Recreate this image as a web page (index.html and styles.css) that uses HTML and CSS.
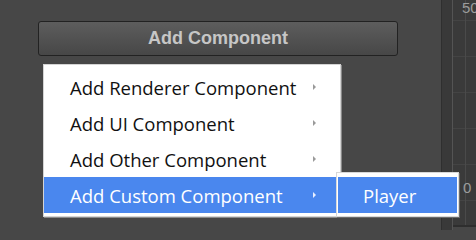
FILE: index.html
```html
<!DOCTYPE html>
<html>
<head>
<meta charset="utf-8">
<link rel="stylesheet" href="styles.css">
</head>
<body>
<div class="screen">
  <div class="inspector">
    <div class="add-btn">Add Component</div>
  </div>
  <div class="divider"></div>
  <div class="chart">
    <span class="label label-top">50</span>
    <span class="label label-zero">0</span>
  </div>

  <div class="menu">
    <div class="item"><span>Add Renderer Component</span><i class="arrow"></i></div>
    <div class="item"><span>Add UI Component</span><i class="arrow"></i></div>
    <div class="item"><span>Add Other Component</span><i class="arrow"></i></div>
    <div class="item active"><span>Add Custom Component</span><i class="arrow"></i></div>
  </div>
  <div class="submenu">
    <div class="item active"><span>Player</span></div>
  </div>
</div>
</body>
</html>
```
FILE: styles.css
```css
html, body {
  margin: 0;
  padding: 0;
}
body {
  background: #474747;
  width: 476px;
  height: 230px;
  overflow: hidden;
}
.screen {
  position: relative;
  display: flex;
  width: 476px;
  height: 230px;
}
.inspector {
  width: 441px;
  flex: none;
  padding: 21px 0 0 38px;
  box-sizing: border-box;
  background: #474747;
}
.add-btn {
  width: 360px;
  height: 35px;
  box-sizing: border-box;
  border: 1px solid #222;
  border-radius: 3px;
  background: linear-gradient(#5d5d5d, #474747);
  color: #c6c6c6;
  font-family: "Liberation Sans", Arial, sans-serif;
  font-weight: bold;
  font-size: 18px;
  display: flex;
  align-items: center;
  justify-content: center;
}
.divider {
  width: 12px;
  flex: none;
  box-sizing: border-box;
  background: #393939;
  border-left: 1px solid #2f2f2f;
  border-right: 1px solid #545454;
}
.chart {
  position: relative;
  flex: 1;
  background-color: #3a3a3a;
  background-image:
    linear-gradient(#4a4a4a, #4a4a4a),
    repeating-linear-gradient(to bottom, transparent 0, transparent 19px, #444 19px, #444 20px, transparent 20px, transparent 36px);
  background-size: 1px 100%, 100% 100%;
  background-position: 12px 0, 0 1px;
  background-repeat: no-repeat;
  border-bottom: 2px solid #2e2e2e;
  height: 225px;
  overflow: hidden;
}
.label {
  position: absolute;
  color: #9c9c9c;
  font-family: "Liberation Sans", Arial, sans-serif;
  font-size: 15px;
  line-height: 15px;
}
.label-top {
  left: 9px;
  top: 0;
}
.label-zero {
  left: 10px;
  top: 180px;
}
.menu {
  position: absolute;
  left: 43px;
  top: 64px;
  width: 298px;
  box-sizing: border-box;
  padding: 4px 0 3px;
  background: #fff;
  border: 1px solid #d4d4d4;
  box-shadow: 1px 1px 0 #8a8a8a;
  font-family: "Open Sans", "Noto Sans", sans-serif;
  font-size: 18.5px;
  color: #111;
}
.item {
  height: 36px;
  display: flex;
  align-items: center;
  padding-left: 26px;
  position: relative;
}
.item.active {
  background: #4a87ee;
  color: #fff;
}
.arrow {
  position: absolute;
  left: 269px;
  top: 15px;
  width: 0;
  height: 0;
  border-left: 3px solid #9a9a9a;
  border-top: 3px solid transparent;
  border-bottom: 3px solid transparent;
}
.item.active .arrow {
  border-left-color: #e8efff;
}
.submenu {
  position: absolute;
  left: 336px;
  top: 172px;
  width: 123px;
  box-sizing: border-box;
  padding: 4px 1px 3px;
  background: #fff;
  border: 1px solid #d8d8d8;
  box-shadow: 1px 1px 0 #6a6a6a;
  font-family: "Open Sans", "Noto Sans", sans-serif;
  font-size: 18.5px;
}
.submenu .item {
  padding-left: 25px;
}
```
